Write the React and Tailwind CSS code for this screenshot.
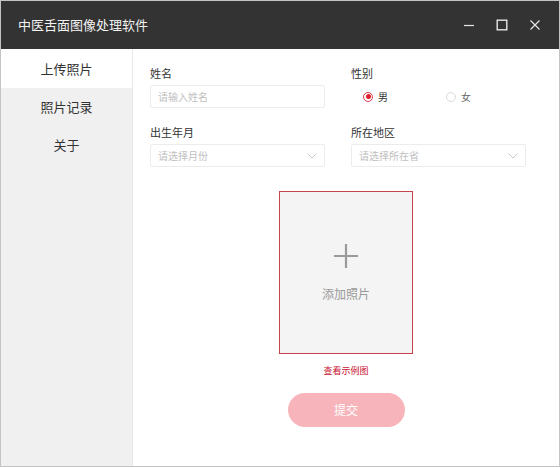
import React from "react";

const ChevronDown = () => (
  <svg width="10" height="6" viewBox="0 0 10 6" fill="none" stroke="#c8c8c8" strokeWidth="1">
    <path d="M0.5 0.5 L5 5 L9.5 0.5" />
  </svg>
);

export default function App() {
  return (
    <div
      className="w-[560px] h-[467px] border border-[#c4c4c4] flex flex-col bg-white overflow-hidden"
      style={{ fontFamily: '"Noto Sans CJK SC", "Noto Sans", sans-serif' }}
    >
      {/* Title bar */}
      <div className="h-[48px] bg-[#333333] flex items-center justify-between shrink-0">
        <span className="pl-[17px] text-[13px] text-[#f2f2f2]">中医舌面图像处理软件</span>
        <div className="flex items-center h-full">
          <div className="w-[33px] flex justify-center">
            <svg width="12" height="12" viewBox="0 0 12 12" stroke="#e6e6e6" strokeWidth="1.2">
              <path d="M1 6.5 H11" />
            </svg>
          </div>
          <div className="w-[33px] flex justify-center">
            <svg width="12" height="12" viewBox="0 0 12 12" fill="none" stroke="#e6e6e6" strokeWidth="1.4">
              <rect x="1.2" y="1.2" width="9.6" height="9.6" />
            </svg>
          </div>
          <div className="w-[33px] mr-[8px] flex justify-center">
            <svg width="12" height="12" viewBox="0 0 12 12" stroke="#e6e6e6" strokeWidth="1.2">
              <path d="M1.5 1.5 L10.5 10.5 M10.5 1.5 L1.5 10.5" />
            </svg>
          </div>
        </div>
      </div>

      <div className="flex flex-1">
        {/* Sidebar */}
        <div className="w-[132px] bg-[#f0f0f0] border-r border-[#e8e8e8] flex flex-col text-[13px] text-[#333]">
          <div className="h-[39px] bg-white flex items-center justify-center">上传照片</div>
          <div className="h-[38px] flex items-center justify-center">照片记录</div>
          <div className="h-[38px] flex items-center justify-center">关于</div>
        </div>

        {/* Main */}
        <div className="flex-1 pt-[16px] flex flex-col">
          <div className="pl-[17px] grid grid-cols-[175px_175px] gap-x-[26px] gap-y-[16px]">
            <div>
              <div className="text-[11px] text-[#333] leading-[16px]">姓名</div>
              <div className="mt-[4px] h-[23px] border border-[#ececec] rounded-[2px] flex items-center px-[7px] text-[10px] text-[#c0c0c0]">
                请输入姓名
              </div>
            </div>
            <div>
              <div className="text-[11px] text-[#333] leading-[16px]">性别</div>
              <div className="mt-[4px] h-[23px] flex items-center pl-[12px] text-[10px] text-[#333]">
                <span className="w-[10px] h-[10px] rounded-full border border-[#e03b4a] flex items-center justify-center">
                  <span className="w-[5px] h-[5px] rounded-full bg-[#e0202f]" />
                </span>
                <span className="ml-[5px]">男</span>
                <span className="ml-[58px] w-[10px] h-[10px] rounded-full border border-[#dcdcdc]" />
                <span className="ml-[5px] text-[#666]">女</span>
              </div>
            </div>
            <div>
              <div className="text-[11px] text-[#333] leading-[16px]">出生年月</div>
              <div className="mt-[4px] h-[23px] border border-[#ececec] rounded-[2px] flex items-center justify-between px-[7px] text-[10px] text-[#c0c0c0]">
                <span>请选择月份</span>
                <ChevronDown />
              </div>
            </div>
            <div>
              <div className="text-[11px] text-[#333] leading-[16px]">所在地区</div>
              <div className="mt-[4px] h-[23px] border border-[#ececec] rounded-[2px] flex items-center justify-between px-[7px] text-[10px] text-[#c0c0c0]">
                <span>请选择所在省</span>
                <ChevronDown />
              </div>
            </div>
          </div>

          {/* Upload */}
          <div className="flex flex-col items-center mt-[24px]">
            <div className="w-[134px] h-[163px] border border-[#c8424e] bg-[#f4f4f4] flex flex-col items-center justify-center">
              <svg width="26" height="26" viewBox="0 0 26 26" stroke="#9a9a9a" strokeWidth="2.2">
                <path d="M13 1 V25 M1 13 H25" />
              </svg>
              <span className="mt-[16px] text-[12px] text-[#999]">添加照片</span>
            </div>
            <div className="mt-[10px] text-[9px] text-[#c8102e]">查看示例图</div>
            <button className="mt-[15px] w-[117px] h-[34px] rounded-full bg-[#f7b4ba] text-white text-[12px]">
              提交
            </button>
          </div>
        </div>
      </div>
    </div>
  );
}
